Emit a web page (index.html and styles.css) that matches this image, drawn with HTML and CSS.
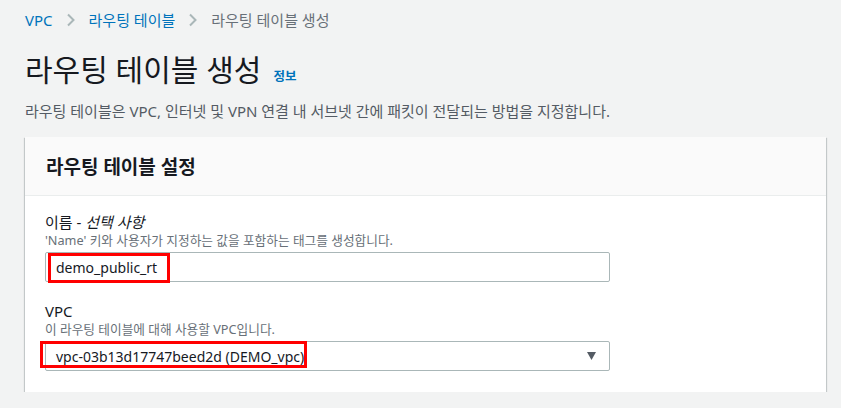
FILE: index.html
```html
<!DOCTYPE html>
<html lang="ko">
<head>
<meta charset="utf-8">
<link rel="stylesheet" href="styles.css">
</head>
<body>
<div class="page">
  <nav class="crumbs">
    <a class="crumb-link">VPC</a>
    <svg class="chev" width="10" height="14" viewBox="0 0 10 14"><path d="M2 1.5 L7.5 7 L2 12.5" fill="none" stroke="#aab7b8" stroke-width="2"/></svg>
    <a class="crumb-link">라우팅 테이블</a>
    <svg class="chev" width="10" height="14" viewBox="0 0 10 14"><path d="M2 1.5 L7.5 7 L2 12.5" fill="none" stroke="#aab7b8" stroke-width="2"/></svg>
    <span class="crumb-current">라우팅 테이블 생성</span>
  </nav>
  <h1 class="title">라우팅 테이블 생성 <span class="info">정보</span></h1>
  <p class="desc">라우팅 테이블은 VPC, 인터넷 및 VPN 연결 내 서브넷 간에 패킷이 전달되는 방법을 지정합니다.</p>
  <section class="card">
    <div class="card-head">라우팅 테이블 설정</div>
    <div class="card-body">
      <div class="field">
        <div class="label">이름 - <i>선택 사항</i></div>
        <div class="hint">'Name' 키와 사용자가 지정하는 값을 포함하는 태그를 생성합니다.</div>
        <div class="control">
          <div class="input">demo_public_rt</div>
          <div class="mark mark-name"></div>
        </div>
      </div>
      <div class="field field-vpc">
        <div class="label">VPC</div>
        <div class="hint">이 라우팅 테이블에 대해 사용할 VPC입니다.</div>
        <div class="control">
          <div class="input select"><span>vpc-03b13d17747beed2d (DEMO_vpc)</span>
            <svg class="caret" width="9" height="8" viewBox="0 0 9 8"><path d="M0 0 H9 L4.5 8 Z" fill="#545b64"/></svg>
          </div>
          <div class="mark mark-vpc"></div>
        </div>
      </div>
    </div>
  </section>
</div>
</body>
</html>
```
FILE: styles.css
```css
html, body {
  margin: 0;
  padding: 0;
  background: #f2f3f3;
}
body {
  font-family: "Noto Sans", "Noto Sans CJK KR", sans-serif;
  color: #16191f;
}
.page {
  padding: 10px 15px 0 25px;
}
.crumbs {
  display: flex;
  align-items: center;
  height: 20px;
  font-size: 15px;
  line-height: 20px;
}
.crumb-link {
  color: #0073bb;
}
.chev {
  margin: 0 13px 0 13px;
}
.crumb-current {
  color: #687078;
}
.title {
  margin: 22px 0 0 0;
  height: 36px;
  font-size: 30px;
  font-weight: normal;
  line-height: 36px;
  color: #16191f;
  display: flex;
  align-items: baseline;
}
.info {
  font-size: 12.5px;
  line-height: 1;
  font-weight: bold;
  color: #0073bb;
  margin-left: 12px;
}
.desc {
  margin: 13px 0 0 0;
  height: 20px;
  font-size: 15px;
  line-height: 20px;
  color: #545b64;
}
.card {
  margin-top: 16px;
  background: #fff;
  box-shadow: 0 1px 1px 0 rgba(0,28,36,.3), 1px 1px 1px 0 rgba(0,28,36,.15), -1px 1px 1px 0 rgba(0,28,36,.15);
}
.card-head {
  height: 59px;
  box-sizing: border-box;
  padding: 0 21px;
  display: flex;
  align-items: center;
  background: #fafafa;
  border-bottom: 1px solid #eaeded;
  font-size: 19px;
  font-weight: bold;
}
.card-body {
  padding: 16px 20px 21px 20px;
}
.label {
  font-size: 15px;
  line-height: 20px;
  color: #16191f;
}
.hint {
  font-size: 12.7px;
  line-height: 16px;
  color: #687078;
}
.control {
  position: relative;
  margin-top: 4px;
  width: 565px;
}
.input {
  box-sizing: border-box;
  height: 30px;
  border: 1px solid #aab7b8;
  border-radius: 2px;
  background: #fff;
  padding: 0 10px;
  font-size: 14px;
  display: flex;
  align-items: center;
}
.select {
  justify-content: space-between;
}
.caret {
  margin-right: 3px;
}
.field-vpc {
  margin-top: 19px;
}
.mark {
  position: absolute;
  border: 3px solid #ff0000;
  box-sizing: border-box;
}
.mark-name {
  left: 3px;
  top: 1px;
  width: 122px;
  height: 30px;
}
.mark-vpc {
  left: -5px;
  top: 0;
  width: 267px;
  height: 27px;
}
```
